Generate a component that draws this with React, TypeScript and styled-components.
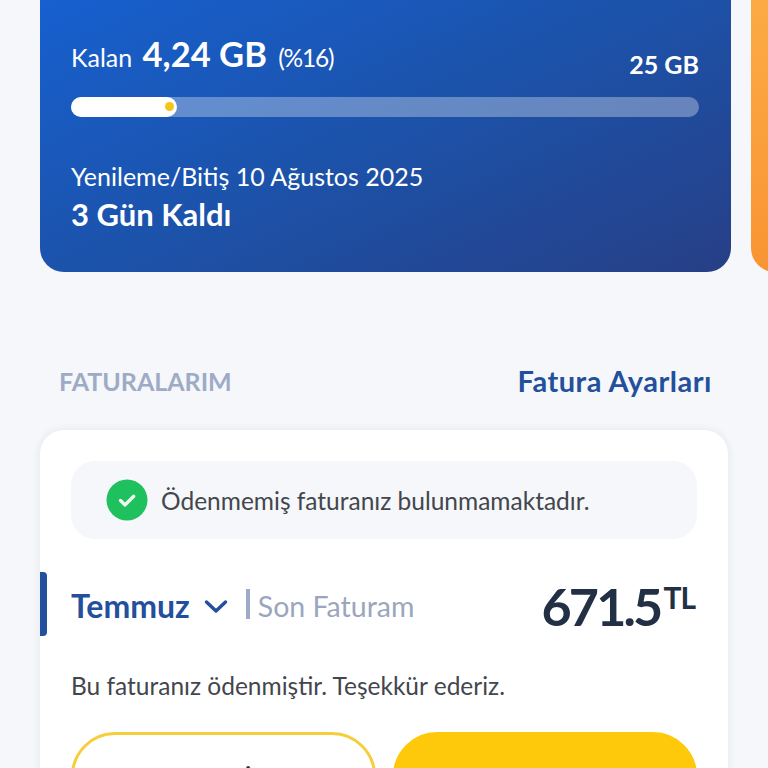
import React from 'react';
import styled, {createGlobalStyle} from 'styled-components';

const GlobalStyle = createGlobalStyle`
  html, body {
    margin: 0;
    padding: 0;
    height: 768px;
    overflow: hidden;
    background: #f5f7fa;
    font-family: "Lato", "Open Sans", sans-serif;
  }
`

const App = () => {
    return (
        <Page>
            <GlobalStyle/>
            <Carousel>
                <DataCard>
                    <UsageRow>
                        <Remaining>
                            Kalan <strong>4,24 GB</strong> <small>(%16)</small>
                        </Remaining>
                        <Total>25 GB</Total>
                    </UsageRow>
                    <Track>
                        <Fill percent={16.9}><Dot/></Fill>
                    </Track>
                    <RenewText>Yenileme/Bitiş 10 Ağustos 2025</RenewText>
                    <DaysLeft>3 Gün Kaldı</DaysLeft>
                </DataCard>
                <NextCard/>
            </Carousel>
            <SectionHeader>
                <SectionTitle>FATURALARIM</SectionTitle>
                <SectionLink>Fatura Ayarları</SectionLink>
            </SectionHeader>
            <BillCard>
                <Notice>
                    <svg width="42" height="42" viewBox="0 0 42 42">
                        <circle cx="21" cy="21" r="20.5" fill="#1fc15f"/>
                        <path d="M14.5 21.5l4.6 4.4 8.6-8.6" fill="none" stroke="#eef9f1" strokeWidth="3.4" strokeLinecap="round" strokeLinejoin="round"/>
                    </svg>
                    <NoticeText>Ödenmemiş faturanız bulunmamaktadır.</NoticeText>
                </Notice>
                <MonthRow>
                    <Marker/>
                    <MonthName>Temmuz</MonthName>
                    <Chevron width="24" height="16" viewBox="0 0 24 16">
                        <path d="M2.5 3l9.5 9 9.5-9" fill="none" stroke="#234f9d" strokeWidth="3.4" strokeLinecap="round" strokeLinejoin="round"/>
                    </Chevron>
                    <Divider/>
                    <LastBill>Son Faturam</LastBill>
                    <Amount>671.5<sup>TL</sup></Amount>
                </MonthRow>
                <PaidText>Bu faturanız ödenmiştir. Teşekkür ederiz.</PaidText>
                <Buttons>
                    <ActionButton>Faturayı İndir</ActionButton>
                    <ActionButton primary/>
                </Buttons>
            </BillCard>
        </Page>
    );
};

export default App;

const Page = styled.div`
  height: 768px;
  overflow: hidden;
  padding-left: 40px;
  box-sizing: border-box;
`
const Carousel = styled.div`
  display: flex;
  gap: 20px;
  height: 272px;
`
const DataCard = styled.div`
  width: 691px;
  flex-shrink: 0;
  box-sizing: border-box;
  padding: 32px 31px 0;
  border-radius: 0 0 24px 24px;
  color: #fff;
  background: linear-gradient(155deg, #1760cf 0%, #1c52a9 50%, #273f86 100%);
`
const NextCard = styled.div`
  width: 100px;
  flex-shrink: 0;
  border-radius: 0 0 0 24px;
  background: linear-gradient(180deg, #fbab45 0%, #f99433 100%);
`
const UsageRow = styled.div`
  display: flex;
  justify-content: space-between;
  height: 53px;
`
const Remaining = styled.div`
  font-size: 25px;
  line-height: 44px;
  strong {
    font-size: 34.5px;
    font-weight: 700;
    margin: 0 3px 0 4px;
  }
  small {
    font-size: 24.5px;
    letter-spacing: -1.2px;
    margin-left: 2px;
  }
`
const Total = styled.div`
  font-size: 25px;
  font-weight: 700;
  margin: 17px 1px 0 0;
`
const Track = styled.div`
  height: 20px;
  margin: 12px 1px 0 0;
  border-radius: 10px;
  background: rgba(255, 255, 255, 0.32);
`
const Fill = styled.div<{percent:number}>`
  position: relative;
  height: 100%;
  width: ${props => props.percent}%;
  border-radius: 10px;
  background: #fff;
`
const Dot = styled.span`
  position: absolute;
  right: 3px;
  top: 5px;
  width: 9px;
  height: 9px;
  border-radius: 50%;
  background: #f5c518;
`
const RenewText = styled.div`
  margin-top: 43px;
  font-size: 25px;
  line-height: 32px;
`
const DaysLeft = styled.div`
  margin-top: 4px;
  font-size: 31px;
  line-height: 36px;
  font-weight: 700;
`
const SectionHeader = styled.div`
  display: flex;
  justify-content: space-between;
  align-items: center;
  height: 36px;
  margin-top: 91px;
  padding: 0 56px 0 19px;
`
const SectionTitle = styled.div`
  font-size: 25px;
  font-weight: 700;
  color: #9dabc6;
`
const SectionLink = styled.div`
  font-size: 29px;
  font-weight: 700;
  letter-spacing: 0.5px;
  margin-bottom: 2px;
  color: #234f9d;
`
const BillCard = styled.div`
  width: 688px;
  height: 420px;
  box-sizing: border-box;
  margin-top: 31px;
  padding: 31px 31px 0;
  border-radius: 24px;
  background: #fff;
  box-shadow: 0 0 8px rgba(40, 60, 90, 0.09);
`
const Notice = styled.div`
  display: flex;
  align-items: center;
  gap: 13px;
  height: 78px;
  padding-left: 35px;
  border-radius: 24px;
  background: #f5f7fa;
`
const NoticeText = styled.div`
  font-size: 24.5px;
  color: #43464d;
`
const MonthRow = styled.div`
  position: relative;
  display: flex;
  align-items: center;
  height: 64px;
  margin-top: 33px;
`
const Marker = styled.div`
  position: absolute;
  left: -31px;
  top: 0;
  width: 7px;
  height: 64px;
  border-radius: 0 4px 4px 0;
  background: #234f9d;
`
const MonthName = styled.div`
  font-size: 32px;
  font-weight: 700;
  color: #234f9d;
  margin: 3px 14px 0 0;
`
const Chevron = styled.svg`
  margin-top: 5px;
`
const Divider = styled.div`
  width: 4px;
  height: 30px;
  margin: 0 8px 0 18px;
  background: #9dabc6;
`
const LastBill = styled.div`
  font-size: 28.5px;
  margin-top: 3px;
  color: #9aa6bd;
`
const Amount = styled.div`
  margin: 4px 2px 0 auto;
  font-size: 52px;
  font-weight: 700;
  letter-spacing: -2.8px;
  color: #222f44;
  sup {
    font-size: 30px;
    line-height: 0;
    vertical-align: 17px;
    letter-spacing: -1px;
    margin-left: 3px;
  }
`
const PaidText = styled.div`
  margin-top: 32px;
  font-size: 24.5px;
  line-height: 36px;
  color: #43464d;
`
const Buttons = styled.div`
  display: flex;
  gap: 17px;
  margin-top: 28px;
`
const ActionButton = styled.div<{primary?:boolean}>`
  flex: 1;
  height: 90px;
  box-sizing: border-box;
  padding-top: 30px;
  text-align: center;
  font-size: 24px;
  font-weight: 700;
  border-radius: 44px;
  color: #222f44;
  border: 3px solid ${props => props.primary?'#ffc90b':'#f6cd3c'};
  background: ${props => props.primary?'#ffc90b':'#fff'};
`
